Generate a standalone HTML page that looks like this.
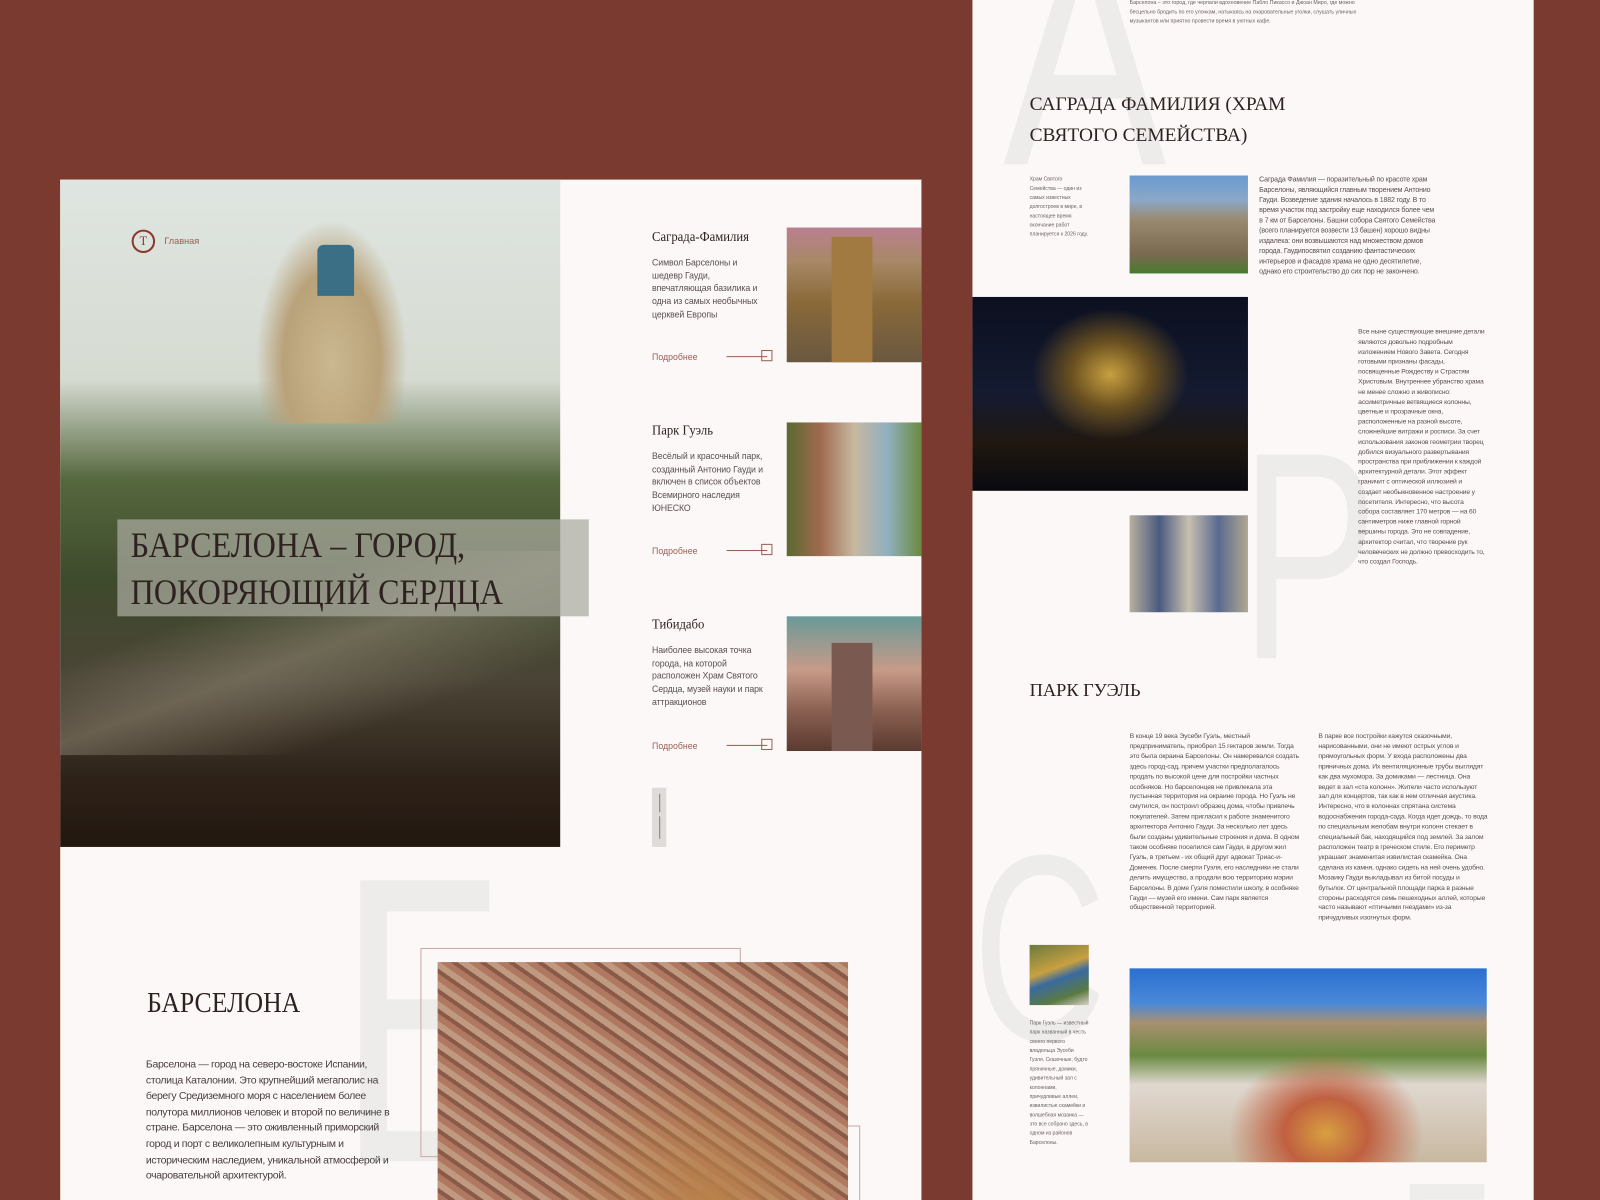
<!DOCTYPE html>
<html><head><meta charset="utf-8"><style>
*{margin:0;padding:0;box-sizing:border-box}
html,body{width:1600px;height:1200px;overflow:hidden}
body{background:#7a3a30;position:relative;font-family:"Liberation Sans Narrow","Liberation Sans",sans-serif;color:#4a4040}
#w{position:absolute;left:0;top:0;width:1568px;height:1176px;transform:scale(1.020408);transform-origin:0 0;overflow:hidden}
.a{position:absolute}
.pg{background:#fcf8f7}
.clip{overflow:hidden}
.serif{font-family:"Liberation Serif",serif;color:#2e2220}
.big{font-family:"Liberation Sans",sans-serif;color:#eeeceb;line-height:1}
.t{font-size:8.6px;line-height:12.7px;color:#5a5050;letter-spacing:-.1px}
.s{font-size:6.8px;line-height:9.9px;color:#5a5050;letter-spacing:-.15px}
.n{font-size:5px;line-height:8.2px;color:#6a6060}
.more{font-size:8.6px;color:#9b5e55}
.arr{border-top:1px solid #9b5e55;height:0}
.box{border:1px solid #9b5e55;width:11px;height:11px}
.h{font-size:13.5px;transform:scaleX(.92);transform-origin:left;white-space:nowrap}
</style></head><body><div id="w">
<div class="a pg clip" style="left:59px;top:176px;width:844px;height:1000px">
 <div class="a big" style="left:271px;top:624px;font-size:400px;transform:scaleX(.7);transform-origin:left">Б</div>
</div>
<div class="a" style="left:59px;top:176px;width:490px;height:654px;background:linear-gradient(180deg,#dfe5e0 0%,#d6dbd2 30%,#56683e 45%,#3e4a2c 60%,#4a4436 75%,#2e2218 90%,#22170f 100%)"></div>
<div class="a" style="left:250px;top:215px;width:150px;height:200px;background:radial-gradient(ellipse at 50% 70%,#cbb890 0%,#b9a27a 45%,transparent 70%)"></div>
<div class="a" style="left:311px;top:240px;width:36px;height:50px;background:#3b6f86;border-radius:6px 6px 0 0"></div>
<div class="a" style="left:59px;top:540px;width:490px;height:200px;background:linear-gradient(160deg,transparent 30%,rgba(150,140,120,.5) 50%,transparent 75%)"></div>
<div class="a" style="left:129px;top:225px;width:23px;height:23px;border:2px solid #8a3a30;border-radius:50%;font-family:'Liberation Serif',serif;font-size:12px;color:#8a3a30;text-align:center;line-height:19px">T</div>
<div class="a" style="left:161px;top:231px;font-size:9px;color:#9b5e55">Главная</div>
<div class="a" style="left:115px;top:509px;width:462px;height:95px;background:rgba(170,170,160,.72)"></div>
<div class="a serif" style="left:128px;top:512px;font-size:35px;line-height:46px;transform:scaleX(.9);transform-origin:left;white-space:nowrap">БАРСЕЛОНА – ГОРОД,<br>ПОКОРЯЮЩИЙ СЕРДЦА</div>

<div class="a serif h" style="left:639px;top:224px">Саграда-Фамилия</div>
<div class="a t" style="left:639px;top:251px;width:115px">Символ Барселоны и шедевр Гауди, впечатляющая базилика и одна из самых необычных церквей Европы</div>
<div class="a more" style="left:639px;top:345px">Подробнее</div>
<div class="a arr" style="left:712px;top:349px;width:40px"></div><div class="a box" style="left:746px;top:343px"></div>
<div class="a" style="left:771px;top:223px;width:132px;height:132px;background:linear-gradient(180deg,#b98090 0%,#a88866 25%,#8a6a3a 55%,#6a5840 100%)"></div>
<div class="a" style="left:815px;top:232px;width:40px;height:123px;background:#a07a40"></div>

<div class="a serif h" style="left:639px;top:414px">Парк Гуэль</div>
<div class="a t" style="left:639px;top:441px;width:118px">Весёлый и красочный парк, созданный Антонио Гауди и включен в список объектов Всемирного наследия ЮНЕСКО</div>
<div class="a more" style="left:639px;top:535px">Подробнее</div>
<div class="a arr" style="left:712px;top:539px;width:40px"></div><div class="a box" style="left:746px;top:533px"></div>
<div class="a" style="left:771px;top:414px;width:132px;height:131px;background:linear-gradient(90deg,#5a6a30 0%,#a06a50 25%,#c8b8a0 50%,#90b0c0 75%,#6a8a40 100%)"></div>

<div class="a serif h" style="left:639px;top:604px">Тибидабо</div>
<div class="a t" style="left:639px;top:631px;width:118px">Наиболее высокая точка города, на которой расположен Храм Святого Сердца, музей науки и парк аттракционов</div>
<div class="a more" style="left:639px;top:726px">Подробнее</div>
<div class="a arr" style="left:712px;top:730px;width:40px"></div><div class="a box" style="left:746px;top:724px"></div>
<div class="a" style="left:771px;top:604px;width:132px;height:132px;background:linear-gradient(180deg,#6a9a98 0%,#c89a88 40%,#8a6050 70%,#5a3a30 100%)"></div>
<div class="a" style="left:815px;top:630px;width:40px;height:106px;background:#7a5a50"></div>

<div class="a" style="left:639px;top:772px;width:14px;height:58px;background:#dedbd8"></div>
<div class="a" style="left:645.5px;top:778px;width:1px;height:18px;background:#8a7a78"></div>
<div class="a" style="left:645.5px;top:800px;width:1px;height:22px;background:#8a7a78"></div>

<div class="a serif" style="left:144px;top:968px;font-size:28px;transform:scaleX(.9);transform-origin:left">БАРСЕЛОНА</div>
<div class="a" style="left:143px;top:1036px;width:245px;font-size:10.3px;line-height:15.6px;color:#4a4040;letter-spacing:-.35px">Барселона — город на северо-востоке Испании, столица Каталонии. Это крупнейший мегаполис на берегу Средиземного моря с населением более полутора миллионов человек и второй по величине в стране. Барселона — это оживленный приморский город и порт с великолепным культурным и историческим наследием, уникальной атмосферой и очаровательной архитектурой.</div>
<div class="a" style="left:412px;top:929px;width:314px;height:205px;border:1px solid #c9a9a5"></div>
<div class="a" style="left:842px;top:1103px;width:1px;height:73px;background:#c9a9a5"></div>
<div class="a" style="left:831px;top:1103px;width:12px;height:1px;background:#c9a9a5"></div>
<div class="a" style="left:429px;top:943px;width:402px;height:233px;background:radial-gradient(ellipse at 65% 100%,#b8804a 0%,transparent 40%),repeating-linear-gradient(35deg,#b07860 0 6px,#8a5a48 6px 10px,#c09a80 10px 16px),#9a6a50"></div>

<div class="a pg clip" style="left:953px;top:0;width:550px;height:1176px">
 <div class="a big" style="left:30px;top:-110px;font-size:320px;transform:scaleX(.75);transform-origin:left">А</div>
 <div class="a big" style="left:262px;top:400px;font-size:290px;transform:scaleX(.7);transform-origin:left">Р</div>
 <div class="a big" style="left:0px;top:800px;font-size:260px;transform:scaleX(.7);transform-origin:left">С</div>
 <div class="a big" style="left:417px;top:1130px;font-size:200px;transform:scaleX(.7);transform-origin:left">Е</div>
</div>
<div class="a n" style="left:1107px;top:-1px;width:235px;font-size:5.2px;line-height:9px">Барселона – это город, где черпали вдохновение Пабло Пикассо и Джоан Миро, где можно бесцельно бродить по его улочкам, натыкаясь на очаровательные уголки, слушать уличных музыкантов или приятно провести время в уютных кафе.</div>
<div class="a serif" style="left:1009px;top:88px;font-size:19px;line-height:30px;white-space:nowrap">САГРАДА ФАМИЛИЯ (ХРАМ<br>СВЯТОГО СЕМЕЙСТВА)</div>
<div class="a n" style="left:1009px;top:172px;width:58px;font-size:5px;line-height:9px">Храм Святого Семейства — один из самых известных долгостроев в мире, в настоящее время окончание работ планируется к 2026 году.</div>
<div class="a" style="left:1107px;top:172px;width:116px;height:96px;background:linear-gradient(180deg,#6a9ad0 0%,#8aa8c8 25%,#9a8a70 45%,#7a6a50 80%,#4a7a30 100%)"></div>
<div class="a s" style="left:1234px;top:172px;width:176px;font-size:6.9px;line-height:10px">Саграда Фамилия — поразительный по красоте храм Барселоны, являющийся главным творением Антонио Гауди. Возведение здания началось в 1882 году. В то время участок под застройку еще находился более чем в 7 км от Барселоны. Башни собора Святого Семейства (всего планируется возвести 13 башен) хорошо видны издалека: они возвышаются над множеством домов города. Гаудипосвятил созданию фантастических интерьеров и фасадов храма не одно десятилетие, однако его строительство до сих пор не закончено.</div>
<div class="a" style="left:953px;top:291px;width:270px;height:190px;background:radial-gradient(ellipse at 50% 40%,#c8a040 0%,#6a5020 20%,transparent 40%),linear-gradient(180deg,#0c1020 0%,#141a30 50%,#201810 75%,#0a0a10 100%)"></div>
<div class="a s" style="left:1331px;top:321px;width:126px;font-size:6.6px;line-height:9.8px">Все ныне существующие внешние детали являются довольно подробным изложением Нового Завета. Сегодня готовыми признаны фасады, посвященные Рождеству и Страстям Христовым. Внутреннее убранство храма не менее сложно и живописно: ассиметричные ветвящиеся колонны, цветные и прозрачные окна, расположенные на разной высоте, сложнейшие витражи и росписи. За счет использования законов геометрии творец добился визуального развертывания пространства при приближении к каждой архитектурной детали. Этот эффект граничит с оптической иллюзией и создает необыкновенное настроение у посетителя. Интересно, что высота собора составляет 170 метров — на 60 сантиметров ниже главной горной вершины города. Это не совпадение, архитектор считал, что творение рук человеческих не должно превосходить то, что создал Господь.</div>
<div class="a" style="left:1107px;top:505px;width:116px;height:95px;background:linear-gradient(90deg,#b8b0a0,#4a5a80,#c8c0b0,#5a6a90,#b0a890)"></div>
<div class="a serif" style="left:1009px;top:666px;font-size:18px">ПАРК ГУЭЛЬ</div>
<div class="a s" style="left:1107px;top:717px;width:168px;font-size:6.7px">В конце 19 века Эусеби Гуэль, местный предприниматель, приобрел 15 гектаров земли. Тогда это была окраина Барселоны. Он намеревался создать здесь город-сад, причем участки предполагалось продать по высокой цене для постройки частных особняков. Но барселонцев не привлекала эта пустынная территория на окраине города. Но Гуэль не смутился, он построил образец дома, чтобы привлечь покупателей. Затем пригласил к работе знаменитого архитектора Антонио Гауди. За несколько лет здесь были созданы удивительные строения и дома. В одном таком особняке поселился сам Гауди, в другом жил Гуэль, в третьем - их общий друг адвокат Триас-и-Доменек. После смерти Гуэля, его наследники не стали делить имущество, а продали всю территорию мэрии Барселоны. В доме Гуэля поместили школу, в особняке Гауди — музей его имени. Сам парк является общественной территорией.</div>
<div class="a s" style="left:1292px;top:717px;width:166px;font-size:6.7px">В парке все постройки кажутся сказочными, нарисованными, они не имеют острых углов и прямоугольных форм. У входа расположены два пряничных дома. Их вентиляционные трубы выглядят как два мухомора. За домиками — лестница. Она ведет в зал «ста колонн». Жители часто используют зал для концертов, так как в нем отличная акустика. Интересно, что в колоннах спрятана система водоснабжения города-сада. Когда идет дождь, то вода по специальным желобам внутри колонн стекает в специальный бак, находящийся под землей. За залом расположен театр в греческом стиле. Его периметр украшает знаменитая извилистая скамейка. Она сделана из камня, однако сидеть на ней очень удобно. Мозаику Гауди выкладывал из битой посуды и бутылок. От центральной площади парка в разные стороны расходятся семь пешеходных аллей, которые часто называют «птичьими гнездами» из-за причудливых изогнутых форм.</div>
<div class="a" style="left:1009px;top:926px;width:58px;height:59px;background:linear-gradient(160deg,#6a7a40,#c8a040 40%,#3a6aa0 55%,#5a7a40 80%,#d8d0c8)"></div>
<div class="a n" style="left:1009px;top:999px;width:58px;font-size:5px;line-height:9px">Парк Гуэль — известный парк названный в честь своего первого владельца Эусеби Гуэля. Сказочные, будто пряничные, домики, удивительный зал с колоннами, причудливые аллеи, извилистые скамейки и волшебная мозаика — это все собрано здесь, в одном из районов Барселоны.</div>
<div class="a" style="left:1107px;top:949px;width:350px;height:190px;background:radial-gradient(ellipse at 55% 85%,#d8a040 0%,#c06040 15%,transparent 35%),linear-gradient(180deg,#2a70d0 0%,#4a88d8 18%,#a89070 28%,#6a8a40 45%,#e0d8d0 60%,#c8b8a0 100%)"></div>
</div></body></html>
